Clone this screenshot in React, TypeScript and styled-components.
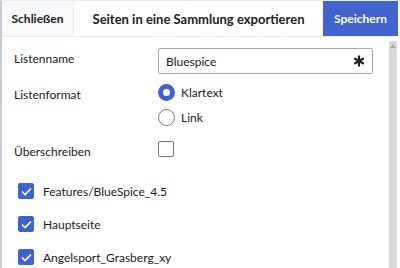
import { createGlobalStyle, styled } from "styled-components";

const GlobalStyle = createGlobalStyle`
  html, body {
    margin: 0;
    padding: 0;
    background: #fff;
    font-family: Lato, "Noto Sans", sans-serif;
    color: #202122;
    overflow: hidden;
  }
`;

const Dialog = styled.div`
  width: 400px;
  height: 268px;
  display: flex;
  flex-direction: column;
  box-sizing: border-box;
  border-left: 2px solid #c8ccd1;
  border-top: 1px solid #eaecf0;
  overflow: hidden;
`;

const Header = styled.div`
  display: flex;
  height: 35px;
  border-bottom: 1px solid #eaecf0;
  flex-shrink: 0;
`;

const CloseButton = styled.div`
  width: 71px;
  background: #f8f9fa;
  border-right: 1px solid #eaecf0;
  display: flex;
  align-items: center;
  justify-content: center;
  font-weight: 700;
  font-size: 12px;
`;

const Title = styled.div`
  flex: 1;
  display: flex;
  align-items: center;
  justify-content: center;
  font-weight: 700;
  font-size: 13px;
`;

const SaveButton = styled.div`
  width: 75px;
  background: #4263d2;
  color: #fff;
  display: flex;
  align-items: center;
  justify-content: center;
  font-weight: 700;
  font-size: 12px;
  margin-right: 2px;
`;

const Body = styled.div`
  flex: 1;
  display: flex;
`;

const Content = styled.div`
  flex: 1;
  padding: 11px 0 0 12px;
`;

const Row = styled.div<{ $h: number }>`
  display: grid;
  grid-template-columns: 144px 1fr;
  height: ${(p) => p.$h}px;
`;

const Label = styled.div<{ $pt: number }>`
  font-size: 12px;
  padding-top: ${(p) => p.$pt}px;
`;

const Input = styled.div`
  width: 215px;
  height: 26px;
  box-sizing: border-box;
  border: 1px solid #a2a9b1;
  border-radius: 2px;
  display: flex;
  align-items: center;
  justify-content: space-between;
  padding: 0 7px 0 7px;
  font-size: 12px;
`;

const Options = styled.div`
  display: flex;
  flex-direction: column;
  gap: 8px;
  padding-top: 2px;
`;

const Option = styled.div`
  display: flex;
  align-items: center;
  gap: 6px;
  font-size: 12px;
`;

const Radio = styled.span<{ $on?: boolean }>`
  width: 17px;
  height: 17px;
  box-sizing: border-box;
  border-radius: 50%;
  border: ${(p) => (p.$on ? "5px solid #3f62d3" : "1px solid #72777d")};
  background: #fff;
`;

const Box = styled.span<{ $on?: boolean }>`
  width: 16px;
  height: 16px;
  box-sizing: border-box;
  border-radius: 2px;
  border: 1px solid ${(p) => (p.$on ? "#3f62d3" : "#72777d")};
  background: ${(p) => (p.$on ? "#3f62d3" : "#fff")};
  display: flex;
  align-items: center;
  justify-content: center;
  flex-shrink: 0;
`;

const PageList = styled.div`
  display: flex;
  flex-direction: column;
  gap: 17px;
  padding: 0 0 0 4px;
`;

const PageItem = styled.div`
  display: flex;
  align-items: center;
  gap: 9px;
  font-size: 12px;
`;

const Scrollbar = styled.div`
  width: 8px;
  margin: 4px 3px 0 0;
  background: #d9d9d9;
  display: flex;
  justify-content: center;
`;

const Arrow = styled.div`
  width: 0;
  height: 0;
  margin-top: 3px;
  border-left: 3px solid transparent;
  border-right: 3px solid transparent;
  border-bottom: 4px solid #a8a8a8;
`;

const Check = () => (
  <svg width="11" height="9" viewBox="0 0 11 9">
    <path d="M1 4.5 L4 7.5 L10 1.5" fill="none" stroke="#fff" strokeWidth="1.6" />
  </svg>
);

const Asterisk = () => (
  <svg width="12" height="12" viewBox="0 0 12 12">
    <g stroke="#202122" strokeWidth="2.2" strokeLinecap="butt">
      <path d="M6 0.5 V11.5" />
      <path d="M1.2 3.2 L10.8 8.8" />
      <path d="M1.2 8.8 L10.8 3.2" />
    </g>
  </svg>
);

const pages = ["Features/BlueSpice_4.5", "Hauptseite", "Angelsport_Grasberg_xy"];

export default function App() {
  return (
    <>
      <GlobalStyle />
      <Dialog>
        <Header>
          <CloseButton>Schließen</CloseButton>
          <Title>Seiten in eine Sammlung exportieren</Title>
          <SaveButton>Speichern</SaveButton>
        </Header>
        <Body>
          <Content>
            <Row $h={34}>
              <Label $pt={3}>Listenname</Label>
              <Input>
                Bluespice
                <Asterisk />
              </Input>
            </Row>
            <Row $h={59}>
              <Label $pt={5}>Listenformat</Label>
              <Options>
                <Option>
                  <Radio $on />
                  Klartext
                </Option>
                <Option>
                  <Radio />
                  Link
                </Option>
              </Options>
            </Row>
            <Row $h={42}>
              <Label $pt={3}>Überschreiben</Label>
              <div>
                <Box />
              </div>
            </Row>
            <PageList>
              {pages.map((p) => (
                <PageItem key={p}>
                  <Box $on>
                    <Check />
                  </Box>
                  {p}
                </PageItem>
              ))}
            </PageList>
          </Content>
          <Scrollbar>
            <Arrow />
          </Scrollbar>
        </Body>
      </Dialog>
    </>
  );
}
